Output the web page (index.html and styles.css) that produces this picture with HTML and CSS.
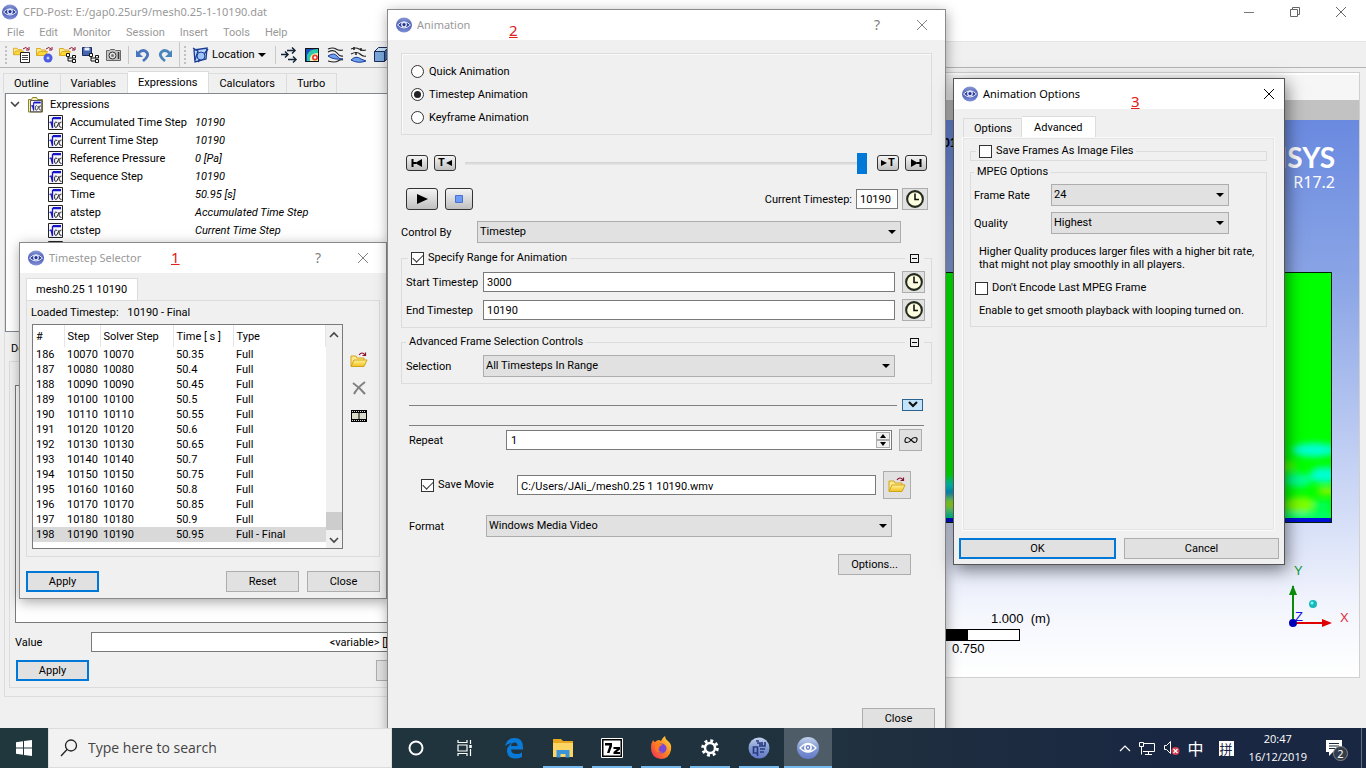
FILE: index.html
```html
<!DOCTYPE html>
<html lang="en">
<head>
<meta charset="utf-8">
<title>CFD-Post</title>
<link rel="stylesheet" href="styles.css">
</head>
<body>
<svg class="defs" aria-hidden="true">
  <defs>
    <linearGradient id="g-eye" x1="0" y1="0" x2="0" y2="1"><stop offset="0" stop-color="#8b9ad6"/><stop offset=".5" stop-color="#4a5cb4"/><stop offset="1" stop-color="#8291d8"/></linearGradient>
    <linearGradient id="g-orb" x1="0" y1="0" x2="0" y2="1"><stop offset="0" stop-color="#c3d2ee"/><stop offset=".5" stop-color="#8099cf"/><stop offset="1" stop-color="#6479cc"/></linearGradient>
    <linearGradient id="g-folder" x1="0" y1="0" x2="0" y2="1"><stop offset="0" stop-color="#fff29a"/><stop offset="1" stop-color="#f2c11c"/></linearGradient>
    <linearGradient id="g-fox" x1="1" y1="0" x2="0" y2="1"><stop offset="0" stop-color="#ffe14a"/><stop offset=".45" stop-color="#ff8a1f"/><stop offset="1" stop-color="#f0255c"/></linearGradient>
    <symbol id="eye" viewBox="0 0 16 16"><ellipse cx="8" cy="8" rx="8" ry="7.5" fill="url(#g-eye)"/><path d="M1.5 8Q8 1.5 14.5 8Q8 14 1.5 8Z" fill="#2f3f9c" stroke="#e8ecfa" stroke-width="1"/><circle cx="8" cy="7.6" r="2.9" fill="#dfe6fa"/><circle cx="8" cy="7.6" r="1.6" fill="#26348c"/></symbol>
    <symbol id="folder" viewBox="0 0 18 18"><path d="M1 15V5h5l1 2h7v3" fill="#ffe88a" stroke="#d0a41c"/><path d="M1 15.5L4 9h13l-3 6.500z" fill="url(#g-folder)" stroke="#d0a41c"/><path d="M9 4q3-4 6 0M15.500 1.500v3h-3" fill="none" stroke="#8a1030" stroke-width="1.200"/></symbol>
    <symbol id="folder-s" viewBox="0 0 12 12"><path d="M.5 9.500V2.500h4l1 1.500h4v2" fill="#ffe88a" stroke="#d8ac24"/><path d="M.5 9.500L3 5.500h8.500L9 9.500z" fill="#ffd836" stroke="#d8ac24"/></symbol>
    <symbol id="tree" viewBox="0 0 10 10"><path d="M2 2v6h5M2 5h5" fill="none" stroke="#111"/><path d="M.5.500h3v3h-3zM6.500 2.500h3v2.500h-3zM6.500 6.500h3v3h-3z" fill="#fff" stroke="#111"/></symbol>
    <symbol id="expr" viewBox="0 0 16 16"><path d="M.5.500h14v14H.5z" fill="#f6f6fa" stroke="#222"/><path d="M1.500 7.500l1.500-.5L4.500 13V3.500h8.500" fill="none" stroke="#1616c8" stroke-width="1.300"/><path d="M5 3h8" stroke="#1616c8" stroke-width="2"/><path d="M9.300 8Q8.800 7 7.800 7q-1.300 0-1.300 2.800 0 2.700 1.300 2.700 1 0 1.500-1.500l2-4M13.500 7q-1.200 0-1.800 1.500l-.8 1.500q.6 2.500 2.600 2.500" fill="none" stroke="#222" stroke-width="1"/></symbol>
    <symbol id="clock" viewBox="0 0 16 16"><circle cx="8" cy="8" r="7" fill="#fdfde0" stroke="#222b1c" stroke-width="1.800"/><path d="M8 3v5.500h3.500" fill="none" stroke="#111" stroke-width="1.400"/></symbol>
    <symbol id="x" viewBox="0 0 10 10"><path d="M0 0l10 10M10 0L0 10" fill="none" stroke="currentColor"/></symbol>
  </defs>
</svg>

<div class="desktop">
  <main class="app">
    <header class="app-title">
      <svg class="i16"><use href="#eye"/></svg>
      <h1 class="title-text">CFD-Post: E:/gap0.25ur9/mesh0.25-1-10190.dat</h1>
      <div class="win-controls">
        <button aria-label="Minimize"><svg width="10" height="10"><path d="M0 5.500h10" stroke="#777"/></svg></button>
        <button aria-label="Restore"><svg width="10" height="10"><path d="M.5 2.500h7v7h-7zM2.500 2.500v-2h7v7h-2" fill="none" stroke="#666"/></svg></button>
        <button aria-label="Close window"><svg width="10" height="10"><use href="#x"/></svg></button>
      </div>
    </header>
    <nav class="menubar">
      <button>File</button><button>Edit</button><button>Monitor</button><button>Session</button><button>Insert</button><button>Tools</button><button>Help</button>
    </nav>
    <div class="toolbar">
      <span class="grip"></span>
      <button aria-label="Load results"><svg class="i18" viewBox="0 0 18 18"><use href="#folder-s" width="11" height="11"/><path d="M10 3q3-3 5 0M16 1v3h-3" fill="none" stroke="#8a1030"/><path d="M7.500 6.500h9v10h-9z" fill="#fff" stroke="#222"/><path d="M9 9.500h6M9 11.500h6M9 13.500h6" stroke="#444"/></svg></button>
      <button aria-label="Load state"><svg class="i18" viewBox="0 0 18 18"><use href="#folder-s" width="12" height="12"/><path d="M10 3q3-3 5 0M16 1v3h-3" fill="none" stroke="#8a1030"/><circle cx="12" cy="12" r="4.500" fill="#4a5ce0"/><circle cx="12" cy="12" r="1.500" fill="#c4ccff"/></svg></button>
      <button aria-label="Import"><svg class="i18" viewBox="0 0 18 18"><use href="#folder-s" width="12" height="12"/><path d="M10 3q3-3 5 0M16 1v3h-3" fill="none" stroke="#8a1030"/><use href="#tree" x="7" y="7" width="10" height="10"/></svg></button>
      <button aria-label="Save state"><svg class="i18" viewBox="0 0 18 18"><path d="M.5 1.500h9v8h-9z" fill="#4466b0" stroke="#1a2a60"/><path d="M2.500 1.500h5v3h-5z" fill="#e8eefc"/><use href="#tree" x="7" y="7" width="10" height="10"/></svg></button>
      <button aria-label="Snapshot"><svg class="i18" viewBox="0 0 18 18"><path d="M1.500 4.500h3l1-1h4l1 1h5v10h-14z" fill="#c4c4c4" stroke="#666"/><circle cx="7.500" cy="9.500" r="3.500" fill="#e4e4e4" stroke="#333"/><circle cx="7.500" cy="9.500" r="1.500" fill="#777"/><path d="M13.500 6v7" stroke="#333" stroke-width="1.500"/></svg></button>
      <span class="sep"></span>
      <button aria-label="Undo"><svg class="i18" viewBox="0 0 18 18"><path d="M4 7.500q5-5 8.500-1.500t-3.500 9" fill="none" stroke="#4a74bc" stroke-width="2.800"/><path d="M2 4v7h7z" fill="#4a74bc"/></svg></button>
      <button aria-label="Redo"><svg class="i18" viewBox="0 0 18 18"><path d="M13 7.500q-5-5-8.500-1.500t3.500 9" fill="none" stroke="#4a84bc" stroke-width="2.800"/><path d="M15 4v7H8z" fill="#4a84bc"/></svg></button>
      <span class="sep tall"></span>
      <span class="grip"></span>
      <button class="location"><svg class="i18" viewBox="0 0 18 18"><path d="M2 4l13-2-1 11L3 16z" fill="#bcd8fa" stroke="#1c3c94" stroke-width="1.300"/><path d="M1 2l5 3-3 9M16 3L6 16" fill="none" stroke="#1c3c94" stroke-width="1.300"/><circle cx="9" cy="10" r="4" fill="#9cc4fa" stroke="#1c3c94"/></svg>Location<span class="caret"></span></button>
      <span class="sep"></span>
      <button aria-label="Vector"><svg class="i18" viewBox="0 0 18 18"><path d="M0 8.500h6M6 4.500h7M7 13.500h7" stroke="#123" stroke-width="1.500"/><path d="M4 5.500l3 3-3 3M11 1.500l3 3-3 3M12 10.500l3 3-3 3" fill="none" stroke="#123" stroke-width="1.500"/></svg></button>
      <button aria-label="Contour"><svg class="i18" viewBox="0 0 18 18"><path d="M1 2h14v14H1z" fill="#1c4cc0"/><path d="M3 15V9q2-6 11-6v12z" fill="#2cc8a8"/><path d="M6 15q-1-8 8-8v8z" fill="#f4f0b4"/><circle cx="11" cy="11.500" r="3" fill="#e84030"/><circle cx="11" cy="11.500" r="1.200" fill="#fff"/><path d="M1.500 2.500h13v13h-13z" fill="none" stroke="#111"/></svg></button>
      <button aria-label="Streamline"><svg class="i18" viewBox="0 0 18 18"><path d="M1 3q5-2 8 0t7 1M1 6q6-3 9 1t6 3M1 15q7 2 10 0t5-1" fill="none" stroke="#222" stroke-width="1.200"/><path d="M1 10q6-4 9 0t6 3q-10 1-15-3z" fill="#6ca0ee" stroke="#1c3c94"/></svg></button>
      <button aria-label="Particle track"><svg class="i18" viewBox="0 0 18 18"><path d="M1 3q5-2 8 0t7 1M1 8q6-3 9 0t6 2" fill="none" stroke="#222" stroke-width="1.200"/><path d="M1 14q5-5 10-1l5 2q-8 3-15-1z" fill="#6ca0ee" stroke="#1c3c94"/><path d="M4 1v3M11 2v3M6 6v3" stroke="#222" stroke-width="1.500"/></svg></button>
      <button aria-label="Volume"><svg class="i18" viewBox="0 0 18 18"><path d="M1.500 5.500h10v10h-10z" fill="#7aa8dc" stroke="#1a2c54"/><path d="M1.500 5.500l4-4h10l-4 4z" fill="#c6e0f8" stroke="#1a2c54"/><path d="M11.500 5.500l4-4v10l-4 4z" fill="#3c68a8" stroke="#1a2c54"/></svg></button>
    </div>

    <div class="workspace">
      <section class="side">
        <div class="tabs" role="tablist">
          <button role="tab">Outline</button><button role="tab">Variables</button><button role="tab" class="on">Expressions</button><button role="tab">Calculators</button><button role="tab">Turbo</button>
        </div>
        <div class="side-body">
          <div class="tree">
            <div class="tree-root"><svg width="10" height="8"><path d="M1 1l4 4 4-4" fill="none" stroke="#444" stroke-width="1.600"/></svg><svg class="i16" viewBox="0 0 16 16"><path d="M.5 15V2.500h3l1-2h4l1 2h5V15z" fill="#f8eeb0" stroke="#8a8430"/><use href="#expr" x="2" y="3" width="13" height="13"/></svg><span>Expressions</span></div>
            <ul class="tree-items">
              <li><svg class="i16"><use href="#expr"/></svg><span>Accumulated Time Step</span><i>10190</i></li>
              <li><svg class="i16"><use href="#expr"/></svg><span>Current Time Step</span><i>10190</i></li>
              <li><svg class="i16"><use href="#expr"/></svg><span>Reference Pressure</span><i>0 [Pa]</i></li>
              <li><svg class="i16"><use href="#expr"/></svg><span>Sequence Step</span><i>10190</i></li>
              <li><svg class="i16"><use href="#expr"/></svg><span>Time</span><i>50.95 [s]</i></li>
              <li><svg class="i16"><use href="#expr"/></svg><span>atstep</span><i>Accumulated Time Step</i></li>
              <li><svg class="i16"><use href="#expr"/></svg><span>ctstep</span><i>Current Time Step</i></li>
              <li><svg class="i16"><use href="#expr"/></svg></li>
            </ul>
          </div>
          <h2 class="details-title">Details</h2>
          <div class="details">
            <div class="details-tab"></div>
            <textarea class="editor" aria-label="Definition"></textarea>
            <div class="value-row"><label for="value">Value</label><input id="value" value="&lt;variable&gt; []"></div>
            <div class="details-actions"><button class="btn primary">Apply</button><button class="btn" aria-label="Reset details"></button></div>
          </div>
        </div>
      </section>
      <section class="viewer">
        <div class="viewer-bar"></div>
        <div class="viewer-tools"></div>
        <div class="canvas">
          <span class="case-label">mesh0.25 1 10190</span>
          <div class="brand"><b>ANSYS</b><span>R17.2</span></div>
          <svg class="contour" width="420" height="251" viewBox="0 0 420 251">
            <defs><filter id="soft" x="-40%" y="-40%" width="180%" height="180%"><feGaussianBlur stdDeviation="3"/></filter><clipPath id="field"><path d="M0 0h420v251H0z"/></clipPath></defs>
            <path d="M0 0h420v251H0z" fill="#0f0"/>
            <g clip-path="url(#field)"><g filter="url(#soft)">
              <ellipse cx="402" cy="178" rx="22" ry="7" fill="#00ffd0"/><ellipse cx="412" cy="203" rx="14" ry="8" fill="#00ffd0"/><ellipse cx="376" cy="194" rx="8" ry="4" fill="#5f0"/><ellipse cx="386" cy="208" rx="14" ry="7" fill="#00ff90"/>
              <ellipse cx="388" cy="233" rx="16" ry="8" fill="#7dff00"/><ellipse cx="415" cy="219" rx="10" ry="3" fill="#b4f000"/><ellipse cx="410" cy="234" rx="10" ry="5" fill="#00ff60"/>
              <ellipse cx="34" cy="212" rx="20" ry="5" fill="#00e0d0"/><ellipse cx="34" cy="221" rx="20" ry="4" fill="#0090f0"/><ellipse cx="40" cy="232" rx="16" ry="5" fill="#b8f000"/><ellipse cx="36" cy="243" rx="18" ry="5" fill="#00d8b0"/>
              <path d="M360 242h60v4h-60z" fill="#0fc"/>
            </g><path d="M0 246h420v5H0z" fill="#0010d8"/></g>
            <path d="M.5.500h419v250H.5z" fill="none" stroke="#062006"/>
          </svg>
          <div class="ruler"><span class="ruler-top">1.000&nbsp; (m)</span><span class="ruler-bar"></span><span class="ruler-bottom">0.750</span></div>
          <svg class="triad" width="66" height="70" viewBox="0 0 66 70">
            <path d="M9 58V22" stroke="#0a8c0a" stroke-width="2"/><path d="M9 21l-4 10h8z" fill="#0a8c0a"/>
            <path d="M9 59h32" stroke="#e00000" stroke-width="2"/><path d="M48 59l-10-4v8z" fill="#e00000"/>
            <circle cx="9" cy="59" r="4" fill="#0000b8"/><circle cx="29" cy="40" r="4" fill="#18b8b8"/><circle cx="28" cy="39" r="1.500" fill="#7ff"/>
            <text x="11" y="57" fill="#1414d8">Z</text><text x="10" y="11" fill="#0a9c3a">Y</text><text x="56" y="58" fill="#e03040">X</text>
          </svg>
        </div>
      </section>
    </div>
  </main>

  <section class="window selector" aria-label="Timestep Selector">
    <header class="win-title"><svg class="i16"><use href="#eye"/></svg><h2 class="title-text">Timestep Selector</h2><span class="mark">1</span><button aria-label="Help">?</button><button aria-label="Close selector"><svg width="10" height="10"><use href="#x"/></svg></button></header>
    <div class="selector-body">
      <div class="tabs" role="tablist"><button role="tab" class="on">mesh0.25 1 10190</button></div>
      <div class="tab-page">
        <p class="loaded">Loaded Timestep: <span>10190 - Final</span></p>
        <div class="list-row">
          <div class="list">
            <table>
              <thead><tr><th>#</th><th>Step</th><th>Solver Step</th><th>Time [ s ]</th><th>Type</th></tr></thead>
              <tbody>
                <tr><td>186</td><td>10070</td><td>10070</td><td>50.35</td><td>Full</td></tr>
                <tr><td>187</td><td>10080</td><td>10080</td><td>50.4</td><td>Full</td></tr>
                <tr><td>188</td><td>10090</td><td>10090</td><td>50.45</td><td>Full</td></tr>
                <tr><td>189</td><td>10100</td><td>10100</td><td>50.5</td><td>Full</td></tr>
                <tr><td>190</td><td>10110</td><td>10110</td><td>50.55</td><td>Full</td></tr>
                <tr><td>191</td><td>10120</td><td>10120</td><td>50.6</td><td>Full</td></tr>
                <tr><td>192</td><td>10130</td><td>10130</td><td>50.65</td><td>Full</td></tr>
                <tr><td>193</td><td>10140</td><td>10140</td><td>50.7</td><td>Full</td></tr>
                <tr><td>194</td><td>10150</td><td>10150</td><td>50.75</td><td>Full</td></tr>
                <tr><td>195</td><td>10160</td><td>10160</td><td>50.8</td><td>Full</td></tr>
                <tr><td>196</td><td>10170</td><td>10170</td><td>50.85</td><td>Full</td></tr>
                <tr><td>197</td><td>10180</td><td>10180</td><td>50.9</td><td>Full</td></tr>
                <tr class="sel"><td>198</td><td>10190</td><td>10190</td><td>50.95</td><td>Full - Final</td></tr>
              </tbody>
            </table>
            <div class="scroll"><svg width="10" height="8"><path d="M1 6l4-4 4 4" fill="none" stroke="#444" stroke-width="1.600"/></svg><span class="thumb"></span><svg width="10" height="8"><path d="M1 2l4 4 4-4" fill="none" stroke="#444" stroke-width="1.600"/></svg></div>
          </div>
          <div class="list-tools">
            <button aria-label="Add timestep"><svg width="18" height="18"><use href="#folder"/></svg></button>
            <button aria-label="Delete timestep"><svg width="16" height="16"><path d="M2 3q7 5 12 11M14 2Q6 8 3 14" fill="none" stroke="#808080" stroke-width="2"/></svg></button>
            <button aria-label="Animate"><svg width="16" height="12"><path d="M0 0h16v12H0z"/><path d="M1 3h6.500v6H1zM8.500 3H15v6H8.500z" fill="#d8dcc8"/><path d="M1 1.500h14M1 10.500h14" stroke="#ddd" stroke-dasharray="1 1"/></svg></button>
          </div>
        </div>
      </div>
      <div class="selector-actions"><button class="btn primary">Apply</button><button class="btn push">Reset</button><button class="btn">Close</button></div>
    </div>
  </section>

  <section class="window animation" aria-label="Animation">
    <header class="win-title"><svg class="i16"><use href="#eye"/></svg><h2 class="title-text">Animation</h2><span class="mark">2</span><button aria-label="Help">?</button><button aria-label="Close animation"><svg width="10" height="10"><use href="#x"/></svg></button></header>
    <form class="anim-body">
      <div class="box modes">
        <label><input type="radio" name="mode">Quick Animation</label>
        <label><input type="radio" name="mode" checked>Timestep Animation</label>
        <label><input type="radio" name="mode">Keyframe Animation</label>
      </div>
      <div class="slide-row">
        <button type="button" class="key" aria-label="First"><svg width="12" height="10"><path d="M1.500 1v8M1 5h4" stroke="#000" stroke-width="2"/><path d="M11 1v8L4 5z"/></svg></button>
        <button type="button" class="key" aria-label="Previous timestep">T<svg width="6" height="8"><path d="M6 1v6L0 4z"/></svg></button>
        <input type="range" min="0" max="100" value="100" aria-label="Timestep">
        <button type="button" class="key" aria-label="Next timestep"><svg width="6" height="8"><path d="M0 1v6l6-3z"/></svg>T</button>
        <button type="button" class="key" aria-label="Last"><svg width="12" height="10"><path d="M10.500 1v8M11 5H7" stroke="#000" stroke-width="2"/><path d="M1 1v8l7-4z"/></svg></button>
      </div>
      <div class="play-row">
        <button type="button" class="key play" aria-label="Play"><svg width="12" height="12"><path d="M1 1v10l11-5z"/></svg></button>
        <button type="button" class="key stop" aria-label="Stop"><svg width="8" height="8"><path d="M.5.500h7v7h-7z" fill="#6a9cf8" stroke="#4a70d0"/></svg></button>
        <label for="current" class="push">Current Timestep:</label><input id="current" class="current" value="10190">
        <button type="button" class="btn wide" aria-label="Pick current timestep"><svg width="18" height="18"><use href="#clock"/></svg></button>
      </div>
      <div class="control-row"><label for="control">Control By</label><span class="drop"><select id="control"><option>Timestep</option></select></span></div>
      <fieldset class="box">
        <legend><label><input type="checkbox" checked>Specify Range for Animation</label></legend>
        <button type="button" class="fold" aria-label="Collapse range"></button>
        <div class="range-row"><label for="start">Start Timestep</label><input id="start" value="3000"><button type="button" class="btn icon" aria-label="Pick start"><svg width="18" height="18"><use href="#clock"/></svg></button></div>
        <div class="range-row"><label for="end">End Timestep</label><input id="end" value="10190"><button type="button" class="btn icon" aria-label="Pick end"><svg width="18" height="18"><use href="#clock"/></svg></button></div>
      </fieldset>
      <fieldset class="box advanced">
        <legend>Advanced Frame Selection Controls</legend>
        <button type="button" class="fold" aria-label="Collapse frame selection"></button>
        <div class="range-row short"><label for="selection">Selection</label><span class="drop"><select id="selection"><option>All Timesteps In Range</option></select></span></div>
      </fieldset>
      <div class="more-row"><span></span><button type="button" aria-label="More options"><svg width="10" height="8"><path d="M1 1l4 4 4-4" fill="none" stroke="#111" stroke-width="2.200"/></svg></button></div>
      <hr>
      <div class="repeat-row"><label for="repeat">Repeat</label><span class="spin"><input id="repeat" value="1"><span class="spin-keys"><button type="button" aria-label="Increase"><svg width="6" height="4"><path d="M0 4l3-4 3 4z"/></svg></button><button type="button" aria-label="Decrease"><svg width="6" height="4"><path d="M0 0l3 4 3-4z"/></svg></button></span></span><button type="button" class="btn icon" aria-label="Repeat forever"><svg width="14" height="8"><path d="M7 4Q4.500 1.500 3 1.500T1 4t2 2.500 4-2.500 4-2.500 2 2.500-2 2.500-4-2.500z" fill="none" stroke="#111" stroke-width="1.200"/></svg></button></div>
      <div class="save-row"><label><input type="checkbox" checked>Save Movie</label><input aria-label="Movie file" value="C:/Users/JAli_/mesh0.25 1 10190.wmv"><button type="button" class="btn browse" aria-label="Browse"><svg width="18" height="18"><use href="#folder"/></svg></button></div>
      <div class="format-row"><label for="format">Format</label><span class="drop"><select id="format"><option>Windows Media Video</option></select></span></div>
      <div class="options-row"><button type="button" class="btn">Options...</button></div>
      <div class="close-row"><button type="button" class="btn">Close</button></div>
    </form>
  </section>

  <section class="window options" aria-label="Animation Options">
    <header class="win-title"><svg class="i16"><use href="#eye"/></svg><h2 class="title-text">Animation Options</h2><span class="mark">3</span><button aria-label="Close options"><svg width="10" height="10"><use href="#x"/></svg></button></header>
    <form class="options-body">
      <div class="tabs" role="tablist"><button type="button" role="tab">Options</button><button type="button" role="tab" class="on">Advanced</button></div>
      <div class="tab-page">
        <fieldset class="box thin"><legend><label><input type="checkbox">Save Frames As Image Files</label></legend></fieldset>
        <fieldset class="box mpeg">
          <legend>MPEG Options</legend>
          <div class="mpeg-row"><label for="rate">Frame Rate</label><span class="drop"><select id="rate"><option>24</option></select></span></div>
          <div class="mpeg-row"><label for="quality">Quality</label><span class="drop"><select id="quality"><option>Highest</option></select></span></div>
          <p>Higher Quality produces larger files with a higher bit rate,<br>that might not play smoothly in all players.</p>
          <label class="encode"><input type="checkbox">Don't Encode Last MPEG Frame</label>
          <p>Enable to get smooth playback with looping turned on.</p>
        </fieldset>
      </div>
      <div class="options-actions"><button type="button" class="btn primary">OK</button><button type="button" class="btn">Cancel</button></div>
    </form>
  </section>

  <footer class="taskbar">
    <button class="start" aria-label="Start"><svg width="16" height="16" fill="#fff"><path d="M0 2.300L7 1.300V7.600H0zM8 1.100L16 0v7.600H8zM0 8.500h7v6.300L0 13.800zM8 8.500h8V16L8 14.900z"/></svg></button>
    <label class="search"><svg width="18" height="18"><circle cx="11" cy="6.500" r="5.500" fill="none" stroke="#222" stroke-width="1.300"/><path d="M7 10.500L1 17" stroke="#222" stroke-width="1.300"/></svg><input placeholder="Type here to search" aria-label="Search"></label>
    <div class="apps">
      <button aria-label="Cortana"><svg width="16" height="16"><circle cx="8" cy="8" r="6.500" fill="none" stroke="#fff" stroke-width="2"/></svg></button>
      <button aria-label="Task View"><svg width="16" height="16" fill="none" stroke="#fff" stroke-width="1.200"><path d="M1 0v2.500h9V0M1 16v-2.500h9V16M1 5h9v6H1zM13.500 0v4M13.500 9v7"/><path d="M13.500 5v3" stroke-width="2.500"/></svg></button>
      <button aria-label="Edge"><svg width="20" height="22" viewBox="0 0 20 22"><path d="M1 9Q3 1 10.500 1 19 1 19 10v2.500H7q.5 4.500 5.500 4.500 3 0 5.500-1.500V20q-3 1.500-7 1.500Q4 21.500 3 15 2.500 9.500 8 6 4 6.500 1 9zm6 0h6.500Q13.500 5.500 10.500 5.500T7 9z" fill="#0a7ad8"/></svg></button>
      <button class="run" aria-label="File Explorer"><svg width="22" height="20"><path d="M1 1h8l2 2h10v16H1z" fill="#e8a820"/><path d="M1 5h20v14H1z" fill="#fcd664"/><path d="M4.500 19.500V12h13v7.500h-4V16h-5v3.500z" fill="#3c94d8"/></svg></button>
      <button class="run" aria-label="7-Zip"><svg width="22" height="20"><path d="M.5.500h21v19H.5z" fill="#000" stroke="#fff"/><path d="M2.500 2.500h17v15h-17z" fill="#fff"/><path d="M4 5h7v3l-2.500 7H6l2.500-7.500H4zM12.500 9H19v2.500L15.800 14H19v2h-6.500v-2L16 11h-3.500z"/></svg></button>
      <button class="run" aria-label="Firefox"><svg width="22" height="24" viewBox="0 0 22 24"><path d="M11 23Q1 22 1 12q0-5 2-8 1 2 2 2 2-2 4-2l2 1q1-3 4-5 0 3 3 5 4 3 3 9-2 9-10 9z" fill="url(#g-fox)"/><circle cx="11.500" cy="12.500" r="5" fill="#7a48d8"/><path d="M5 9q4-3 8 0-3 0-4 3-2 4 4 4-6 2-8-3z" fill="#ff7a1c"/></svg></button>
      <button class="run" aria-label="Settings"><svg width="18" height="18" viewBox="0 0 18 18" fill="none" stroke="#fff"><circle cx="9" cy="9" r="5" stroke-width="2.500"/><circle cx="9" cy="9" r="7.300" stroke-width="3" stroke-dasharray="2.870 2.870"/></svg></button>
      <button class="run" aria-label="Ansys Workbench"><svg width="22" height="22"><circle cx="11" cy="11" r="10.500" fill="url(#g-orb)"/><path d="M5.500 10h4v6h-4zM9 6h3v4M8 4h3M14 5v4h3V5M12 12h5M12 15h4M9.500 16v3" fill="none" stroke="#2c3c84" stroke-width="1.700"/></svg></button>
      <button class="run active" aria-label="CFD-Post"><svg width="22" height="24"><circle cx="11" cy="12" r="11" fill="url(#g-orb)"/><path d="M3 12q8-9 16 0-8 8-16 0z" fill="#7c92cc" stroke="#fff" stroke-width="1.300"/><circle cx="11" cy="11.500" r="3.200" fill="#7488c8" stroke="#fff" stroke-width="1.500"/><circle cx="11" cy="11.500" r="1" fill="#fff"/></svg></button>
    </div>
    <div class="tray">
      <div class="status">
        <button aria-label="Show hidden icons"><svg width="12" height="8"><path d="M1 7l5-5 5 5" fill="none" stroke="#fff" stroke-width="1.200"/></svg></button>
        <button aria-label="Network"><svg width="18" height="14"><path d="M5 2.500h11.500v8H5M10.500 10.500v3M7 13.500h7M3.500 6v7.500M1.500 1.500h4v4h-4z" fill="none" stroke="#fff"/></svg></button>
        <button aria-label="Sound muted"><svg width="18" height="16"><path d="M1.500 5.500h2l4-4v12l-4-4h-2z" fill="none" stroke="#fff"/><circle cx="12.500" cy="11" r="4" fill="#d83a50"/><path d="M10.500 9l4 4M14.500 9l-4 4" stroke="#fff" stroke-width="1.300"/></svg></button>
        <span class="ime" lang="zh">中</span>
      </div>
      <span class="ime boxed" lang="zh">拼</span>
      <time class="clock"><span>20:47</span><span>16/12/2019</span></time>
      <button class="notes" aria-label="Notifications"><svg width="18" height="18"><path d="M1 1h16v12H8l-4 4v-4H1z" fill="#fff"/><path d="M4 4.500h10M4 7h10M4 9.500h6" stroke="#1b2840"/></svg><span class="badge">2</span></button>
      <span class="peek"></span>
    </div>
  </footer>
</div>
</body>
</html>
```

FILE: styles.css
```css
:root {
  --ui: "Roboto", "Noto Sans", sans-serif;
  --caption: "Noto Sans", "Open Sans", sans-serif;
  --face: #f0f0f0;
  --rule: #dcdcdc;
  --edge: #adadad;
  --dark: #7a7a7a;
  --blue: #0078d7;
}
* { box-sizing: border-box; }
body { margin: 0; font: 11px/14px var(--ui); color: #000; }
button, input, select, textarea { font: inherit; color: inherit; border-radius: 0; margin: 0; }
button { padding: 0; border: 0; background: none; }
h1, h2, p, ul { margin: 0; padding: 0; font-weight: normal; list-style: none; }
label { white-space: nowrap; }
svg { flex: none; display: block; }
.defs { position: absolute; width: 0; height: 0; }
.i16 { width: 16px; height: 16px; }
.i18 { width: 18px; height: 18px; }
.push { margin-left: auto; }

.desktop { position: relative; height: 100vh; overflow: hidden; display: flex; flex-direction: column; }
.app { flex: 1; min-height: 0; display: flex; flex-direction: column; background: var(--face); }

/* main window chrome */
.app-title { display: flex; align-items: center; height: 24px; padding: 0 2px 0 2px; gap: 5px; background: #fff; }
.title-text { font: 11px/16px var(--caption); color: #999; white-space: nowrap; }
.win-controls { display: flex; margin-left: auto; color: #666; }
.win-controls button { width: 46px; height: 20px; display: grid; place-items: center; }
.menubar { display: flex; height: 18px; padding-left: 7px; gap: 15px; background: #fff; border-bottom: 1px solid #e4e4e4; color: #999; line-height: 16px; align-items: center; }
.toolbar { display: flex; align-items: center; height: 26px; padding-left: 5px; gap: 5px; border-bottom: 1px solid #b4b4b4; white-space: nowrap; }
.grip { width: 3px; height: 18px; border-left: 2px dotted #c0c0c0; }
.sep { width: 1px; height: 18px; background: #c8c8c8; }
.sep.tall { height: 25px; margin: 0 -1px; }
.location { display: flex; align-items: center; gap: 2px; }
.caret { margin: 0 4px 0 1px; border: 4px solid transparent; border-top-color: #000; border-bottom-width: 0; }

.workspace { flex: 1; min-height: 0; display: grid; grid-template-columns: 460px 1fr; padding: 3px 6px 31px 4px; }

/* tabs */
.tabs { display: flex; align-items: flex-end; }
.tabs button { height: 20px; padding: 0 11px 0 10px; border: 1px solid var(--rule); border-bottom: 0; white-space: nowrap; }
.tabs button + button { border-left: 0; }
.tabs .on { height: 22px; background: #fff; }

/* expressions panel */
.side { display: flex; flex-direction: column; min-width: 0; min-height: 0; border-bottom: 1px solid var(--rule); }
.side .tabs { margin-left: -1px; }
.side-body { flex: 1; min-height: 0; display: flex; flex-direction: column; border-left: 1px solid var(--rule); padding-bottom: 8px; }
.tree { height: 239px; flex: none; border: 1px solid #828790; background: #fff; padding: 2px 4px; overflow: hidden; }
.tree-root, .tree-items li { display: flex; align-items: center; height: 18px; gap: 6px; }
.tree-root svg + svg { margin-left: 2px; }
.tree-items { padding-left: 38px; }
.tree-items li span { width: 119px; }
.details-title { font: inherit; padding: 10px 0 5px 6px; }
.details { flex: 1; min-height: 0; display: flex; flex-direction: column; margin-left: 4px; border: 1px solid var(--rule); padding: 0 5px 6px; }
.details-tab { height: 23px; }
.editor { flex: 1; min-height: 0; resize: none; background: #fff; border: 1px solid var(--dark); }
.value-row { display: flex; align-items: center; padding: 9px 0 8px; }
.value-row label { width: 76px; padding-top: 1px; }
.value-row input { width: 300px; height: 20px; border: 1px solid var(--dark); text-align: right; padding: 1px 2px 0; }
.details-actions { display: flex; gap: 287px; padding-left: 1px; }

/* 3-D viewer */
.viewer { display: flex; flex-direction: column; border: 1px solid #d0d0d0; margin: 1px 0 19px 4px; min-height: 0; }
.viewer-bar { height: 27px; background: #f6f6f6; border-top: 2px solid #fff; }
.viewer-tools { height: 20px; background: #c2c2c2; }
.canvas { position: relative; flex: 1; min-height: 0; background: linear-gradient(#6a8ae0, #8ca6e6 30%, #d2dcf7 70%, #f4f6fd 88%, #fff); overflow: hidden; font-family: "Liberation Sans", sans-serif; }
.case-label { position: absolute; right: 389px; top: 16px; font: 700 12px/14px "Liberation Sans", sans-serif; }
.brand { position: absolute; right: 24px; top: 21px; display: flex; flex-direction: column; align-items: flex-end; color: #fff; font: 16px/18px "Noto Sans", sans-serif; }
.brand b { font: 700 28px/32px "Lato", sans-serif; }
.contour { position: absolute; right: 27px; top: 152px; }
.ruler { position: absolute; right: 310px; top: 491px; width: 130px; height: 46px; font-size: 13px; line-height: 15px; }
.ruler-top, .ruler-bottom, .ruler-bar { position: absolute; white-space: nowrap; }
.ruler-top { left: 72px; top: 0; }
.ruler-bar { left: 0; right: 29px; top: 18px; height: 12px; border: 1px solid #000; background: linear-gradient(90deg, #000 48%, #fff 48%); }
.ruler-bottom { left: 33px; top: 30px; }
.triad { position: absolute; right: 9px; top: 444px; font: 13px "Liberation Sans", sans-serif; overflow: visible; }

/* dialogs */
.window { position: absolute; background: var(--face); border: 1px solid #8a8a8a; box-shadow: 1px 3px 12px rgba(0, 0, 0, .35); }
.win-title { position: relative; display: flex; align-items: center; height: 30px; padding: 0 18px 0 8px; gap: 5px; background: #fff; color: #808080; }
.win-title button { width: 10px; height: 20px; display: grid; place-items: center; font: 14px/20px var(--caption); }
.win-title button:nth-of-type(2) { margin-left: 30px; }
.win-title .mark + button { margin-left: auto; }
.mark { position: absolute; color: #e02020; text-decoration: underline; font: 15px/20px var(--caption); }
.btn { width: 73px; height: 21px; flex: none; border: 1px solid var(--edge); background: #e1e1e1; display: grid; place-items: center; }
.btn.primary { border: 2px solid var(--blue); }
.btn.icon { width: 23px; height: 22px; }
.btn.wide { width: 26px; height: 22px; }
.btn.browse { width: 28px; height: 28px; }
.box { min-width: 0; margin: 0; border: 1px solid var(--rule); box-shadow: inset 1px 1px #fafafa; position: relative; }
fieldset.box { box-shadow: none; }
legend { display: block; height: 14px; padding: 0 3px; margin-left: 2px; }
legend label { display: flex; align-items: center; height: 14px; }
input[type="checkbox"], input[type="radio"] { appearance: none; flex: none; width: 13px; height: 13px; border: 1px solid #333; background: #fff; margin-right: 4px; display: grid; place-items: center; }
input[type="radio"] { border-radius: 50%; margin-right: 5px; }
input[type="radio"]:checked::after { content: ""; width: 7px; height: 7px; border-radius: 50%; background: #222; }
input[type="checkbox"]:checked::after { content: ""; width: 9px; height: 5px; margin-bottom: 3px; border: solid #333; border-width: 0 0 1px 1px; transform: rotate(-45deg); }
.drop { position: relative; flex: 1; height: 22px; display: flex; }
.drop::after { content: ""; position: absolute; right: 5px; top: 9px; border: 4px solid transparent; border-top-color: #000; border-bottom-width: 0; }
.drop select { appearance: none; flex: 1; width: 100%; height: 22px; border: 1px solid var(--edge); background: #e1e1e1; padding: 0 2px; }
.anim-body input:not([type]) { height: 20px; min-width: 0; border: 1px solid var(--dark); background: #fff; padding: 1px 3px 0; }

/* timestep selector */
.selector { left: 19px; top: 242px; width: 368px; }
.selector .mark { left: 151px; top: 4px; }
.selector-body { padding: 5px 6px 6px; }
.selector .tabs button { padding: 0 10px 0 9px; }
.selector .tab-page { border: 1px solid var(--rule); padding: 5px 5px 7px; }
.loaded { padding-bottom: 4px; margin-left: -1px; }
.loaded span { margin-left: 6px; }
.list-row { display: flex; gap: 7px; }
.list { width: 311px; height: 225px; display: flex; border: 1px solid var(--dark); background: #fff; }
.list table { flex: 1; border-collapse: collapse; table-layout: fixed; width: 293px; align-self: flex-start; }
.list th, .list td { padding: 0 0 0 3px; text-align: left; font-weight: normal; height: 15px; line-height: 15px; white-space: nowrap; }
.list th { height: 22px; border-right: 1px solid #e5e5e5; }
.list th:nth-child(1) { width: 31px; }
.list th:nth-child(2) { width: 36px; }
.list th:nth-child(3) { width: 73px; }
.list th:nth-child(4) { width: 60px; }
.sel td { background: #d9d9d9; }
.scroll { width: 16px; background: var(--face); display: flex; flex-direction: column; align-items: center; padding: 6px 0 4px; }
.thumb { width: 16px; height: 18px; background: #cdcdcd; margin: auto 0 6px; }
.list-tools { display: flex; flex-direction: column; align-items: center; gap: 11px; padding-top: 27px; }
.list-tools button { width: 18px; height: 17px; display: grid; place-items: center; }
.selector-actions { display: flex; gap: 8px; padding-top: 14px; }

/* animation */
.animation { left: 387px; top: 9px; width: 559px; }
.animation .mark { left: 121px; top: 10px; }
.anim-body { padding: 13px 13px 20px; }
.anim-body label { padding-top: 2px; }
.anim-body legend, .anim-body legend label { padding-top: 0; }
.modes { height: 82px; padding: 5px 9px; display: flex; flex-direction: column; }
.modes label { display: flex; align-items: center; height: 23px; }
.slide-row { display: flex; align-items: center; gap: 6px; height: 22px; margin: 17px 5px 0; }
.key { display: flex; align-items: center; justify-content: center; gap: 1px; width: 22px; height: 16px; border: 1px solid #333; border-radius: 3px; background: linear-gradient(#f4f4f4, #c0c0c0); font-weight: 700; }
.slide-row input { appearance: none; flex: 1; min-width: 0; height: 22px; margin: 0 4px 0 3px; background: linear-gradient(#d0d0d0, #e8e8e8) center / 100% 3px no-repeat; }
.slide-row input::-webkit-slider-thumb { appearance: none; width: 10px; height: 21px; background: var(--blue); }
.play-row { display: flex; align-items: center; gap: 4px; height: 22px; margin: 14px 4px 0 5px; }
.play { width: 32px; height: 22px; }
.stop { width: 28px; height: 22px; margin-left: 3px; }
.anim-body .current { width: 42px; }
.control-row { display: flex; align-items: center; margin: 11px 31px 8px 0; }
.control-row label { width: 76px; }
.anim-body fieldset { padding: 6px 6px 6px 4px; }
.advanced { margin-top: 7px; }
.advanced legend { margin-left: 0; }
.fold { position: absolute; right: 12px; top: -11px; width: 9px; height: 9px; border: 1px solid #111; background: linear-gradient(#111, #111) center / 5px 1px no-repeat var(--face); box-shadow: -5px 0 var(--face), 5px 0 var(--face); }
.range-row { display: flex; align-items: center; height: 22px; }
.range-row + .range-row { margin-top: 6px; }
.range-row label { width: 77px; }
.range-row input { flex: 1; margin-right: 7px; }
.range-row.short { margin-right: 30px; }
.more-row { display: flex; align-items: center; gap: 5px; margin: 15px 9px 14px 8px; }
.more-row span { flex: 1; height: 1px; background: #808080; }
.more-row button { width: 21px; height: 12px; border: 1px solid #2c628b; background: #c4e4fb; display: grid; place-items: center; }
hr { height: 1px; border: 0; background: #808080; margin: 0 8px 3px; }
.repeat-row { display: flex; align-items: center; gap: 7px; margin: 0 10px 0 8px; }
.repeat-row label { width: 90px; }
.spin { flex: 1; display: flex; height: 20px; border: 1px solid var(--dark); background: #fff; padding: 1px; }
.anim-body .spin input { flex: 1; border: 0; height: 16px; background: none; }
.spin-keys { display: flex; flex-direction: column; width: 14px; }
.spin-keys button { flex: 1; min-height: 0; border: 1px solid var(--edge); background: var(--face); display: grid; place-items: center; }
.save-row { display: flex; align-items: center; gap: 7px; margin: 20px 21px 16px 20px; }
.save-row label { display: flex; align-items: center; width: 89px; padding-top: 0; }
.anim-body .save-row > input { flex: 1; padding-top: 2px; }
.format-row { display: flex; align-items: center; margin: 0 40px 17px 8px; }
.format-row label { width: 77px; }
.options-row { display: flex; justify-content: flex-end; margin-right: 21px; }
.close-row { display: flex; justify-content: flex-end; margin: 133px -3px 0 0; }

/* animation options */
.options { left: 953px; top: 78px; width: 332px; border-color: #555; box-shadow: 2px 5px 16px rgba(0, 0, 0, .5); }
.options .title-text, .options .win-title { color: #000; }
.options .win-title { padding-right: 10px; }
.options .mark { left: 177px; top: 12px; }
.options-body { padding: 7px 5px 5px; }
.options .tabs { padding-left: 4px; }
.options .tabs button { padding: 0 9px 0 10px; }
.options .tabs button.on { padding: 0 12px; }
.options .tab-page { height: 392px; margin: 0 5px 8px 4px; border: 1px solid #e4e4e4; outline: 1px solid #fafafa; padding: 5px 6px 0; }
.thin { height: 17px; padding: 0; }
.mpeg { margin-top: 4px; padding: 5px 4px 9px 3px; }
.mpeg legend { margin-left: 0; }
.mpeg-row { display: flex; align-items: center; margin: 0 33px 6px 0; }
.mpeg-row label { width: 77px; padding-top: 1px; }
.mpeg p { padding: 5px 0 0 5px; line-height: 13px; white-space: nowrap; }
.mpeg .encode { display: flex; align-items: center; margin: 10px 0 4px 1px; }
.thin legend { margin-left: 5px; }
.options-actions { display: flex; gap: 8px; }
.options-actions .btn { flex: 1; }

/* taskbar */
.taskbar { position: relative; flex: none; height: 40px; display: flex; background: linear-gradient(90deg, #20373d, #20313e 60%, #1a2742 85%); }
.taskbar button { display: grid; place-items: center; }
.start { width: 48px; }
.search { display: flex; align-items: center; width: 344px; gap: 10px; padding: 0 11px; background: #f2f2f2; border: 1px solid #dcdcdc; }
.search input { flex: 1; min-width: 0; border: 0; padding: 0; background: none; font: 14px/20px "Open Sans", sans-serif; }
.search input::placeholder { color: #444; }
.apps { display: flex; gap: 1px; }
.apps button { width: 48px; }
.run { background: linear-gradient(#76b9ed, #76b9ed) center bottom / 40px 2px no-repeat; }
.apps .active { background: linear-gradient(#76b9ed, #76b9ed) center bottom / 48px 2px no-repeat #4d5c67; }
.tray, .status { display: flex; align-items: center; color: #fff; }
.tray { margin-left: auto; gap: 15px; }
.status { gap: 7px; }
.ime { font: 16px/20px "Noto Sans CJK SC", sans-serif; }
.boxed { width: 15px; height: 15px; font-size: 13px; line-height: 15px; background: #fff; color: #1a2742; text-align: center; }
.clock { display: flex; flex-direction: column; align-items: center; font: 11px/18px "Open Sans", sans-serif; }
.notes { position: relative; width: 24px; height: 24px; }
.badge { position: absolute; left: 11px; top: 10px; width: 15px; height: 15px; border: 1px solid #888; border-radius: 50%; background: #333c48; color: #fff; font: 11px/13px var(--caption); text-align: center; }
.peek { width: 5px; height: 40px; border-left: 1px solid #66707c; }
```
